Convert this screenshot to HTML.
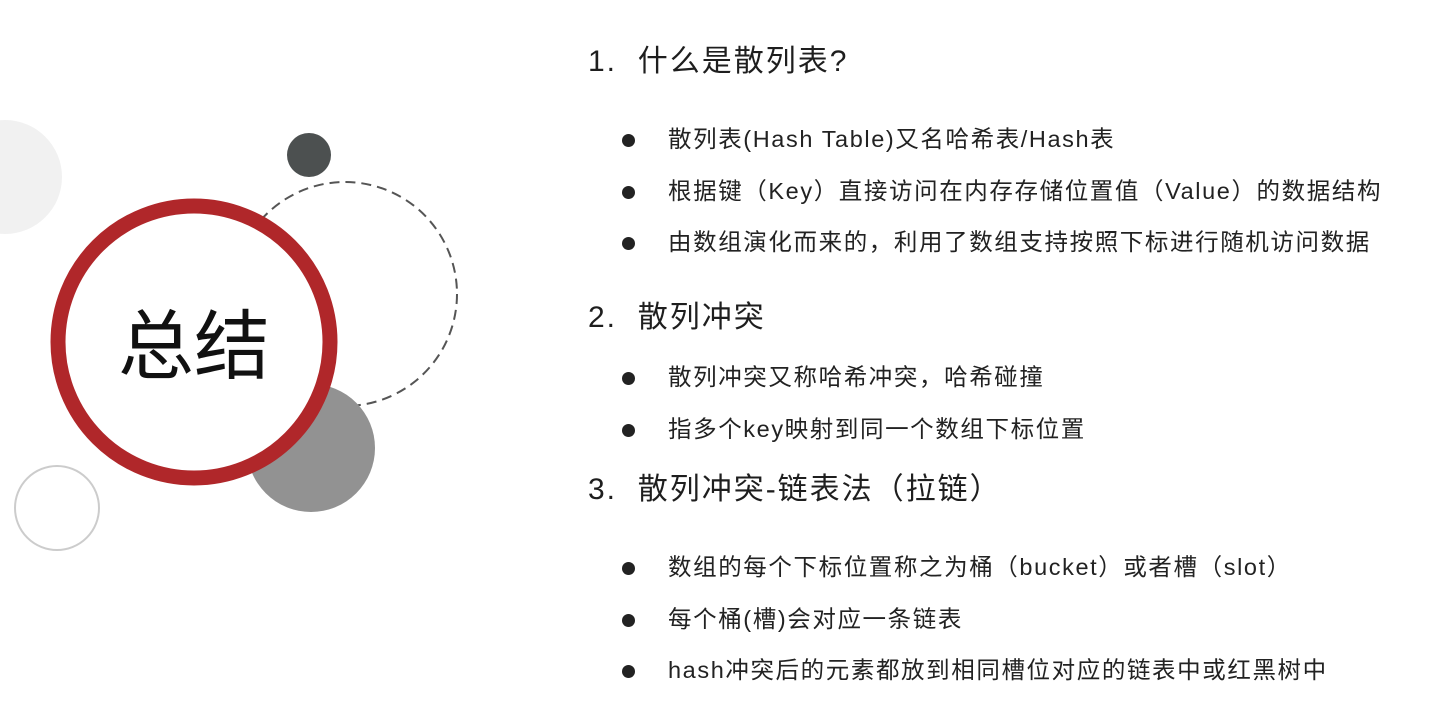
<!DOCTYPE html>
<html><head><meta charset="utf-8"><style>
body{margin:0;width:1446px;height:728px;background:#fff;overflow:hidden;position:relative;font-family:"Liberation Sans","Noto Sans CJK SC",sans-serif;color:#222}
.t{position:absolute;white-space:nowrap;line-height:1}
.h{left:588px;font-size:30px;color:#1e1e1e;letter-spacing:2px}
.b{left:668px;font-size:23.5px;color:#222;letter-spacing:1.6px}
.d{position:absolute;left:622px;width:13px;height:13px;border-radius:50%;background:#222}
</style></head><body>
<svg width="480" height="600" style="position:absolute;left:0;top:0">
<circle cx="5" cy="177" r="57" fill="#f1f1f1"/>
<circle cx="309" cy="155" r="22" fill="#4c5050"/>
<circle cx="345" cy="294" r="112" fill="none" stroke="#555" stroke-width="2" stroke-dasharray="10,6"/>
<circle cx="311" cy="448" r="64" fill="#929292"/>
<circle cx="194" cy="342" r="136" fill="#fff" stroke="#b0272a" stroke-width="15"/>
<circle cx="57" cy="508" r="42" fill="none" stroke="#ccc" stroke-width="2"/>
<text x="194" y="373" font-size="76" text-anchor="middle" fill="#111" font-family="Noto Sans CJK SC, sans-serif">总结</text>
</svg>
<div class="t h" style="top:47px">1.&nbsp; 什么是散列表?</div>
<div class="d" style="top:134px"></div><div class="t b" style="top:128px">散列表(Hash Table)又名哈希表/Hash表</div>
<div class="d" style="top:186px"></div><div class="t b" style="top:180px">根据键（Key）直接访问在内存存储位置值（Value）的数据结构</div>
<div class="d" style="top:237px"></div><div class="t b" style="top:231px">由数组演化而来的，利用了数组支持按照下标进行随机访问数据</div>
<div class="t h" style="top:303px">2.&nbsp; 散列冲突</div>
<div class="d" style="top:372px"></div><div class="t b" style="top:366px">散列冲突又称哈希冲突，哈希碰撞</div>
<div class="d" style="top:424px"></div><div class="t b" style="top:418px">指多个key映射到同一个数组下标位置</div>
<div class="t h" style="top:475px">3.&nbsp; 散列冲突-链表法（拉链）</div>
<div class="d" style="top:562px"></div><div class="t b" style="top:556px">数组的每个下标位置称之为桶（bucket）或者槽（slot）</div>
<div class="d" style="top:614px"></div><div class="t b" style="top:608px">每个桶(槽)会对应一条链表</div>
<div class="d" style="top:665px"></div><div class="t b" style="top:659px">hash冲突后的元素都放到相同槽位对应的链表中或红黑树中</div>
</body></html>
